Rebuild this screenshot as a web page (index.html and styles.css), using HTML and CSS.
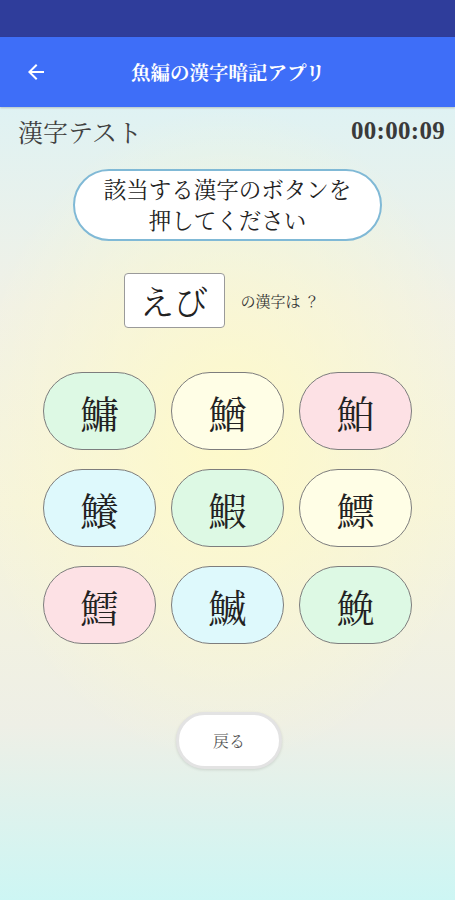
FILE: index.html
```html
<!DOCTYPE html>
<html lang="ja">
<head>
<meta charset="utf-8">
<title>魚編の漢字暗記アプリ</title>
<link rel="stylesheet" href="styles.css">
</head>
<body>
<div class="screen">
  <div class="status-bar"></div>
  <header class="app-bar">
    <svg class="back" width="24" height="24" viewBox="0 0 24 24"><path d="M20 11H7.83l5.59-5.59L12 4l-8 8 8 8 1.41-1.41L7.83 13H20v-2z" fill="#fff"/></svg>
    <h1 class="app-title">魚編の漢字暗記アプリ</h1>
  </header>
  <main class="content">
    <div class="title-row">
      <span class="page-title">漢字テスト</span>
      <span class="timer">00:00:09</span>
    </div>
    <div class="instruction">該当する漢字のボタンを<br>押してください</div>
    <div class="question">
      <div class="reading">えび</div>
      <span class="question-label">の漢字は ？</span>
    </div>
    <div class="grid">
      <button class="kanji green">鱅</button>
      <button class="kanji cream">鰌</button>
      <button class="kanji pink">鮊</button>
      <button class="kanji cyan">鱶</button>
      <button class="kanji green">鰕</button>
      <button class="kanji cream">鰾</button>
      <button class="kanji pink">鱈</button>
      <button class="kanji cyan">鰄</button>
      <button class="kanji green">鮸</button>
    </div>
    <div class="back-row">
      <button class="back-btn">戻る</button>
    </div>
  </main>
</div>
</body>
</html>
```

FILE: styles.css
```css
html, body {
  margin: 0;
  padding: 0;
}
body {
  width: 455px;
  height: 900px;
  overflow: hidden;
  font-family: "Noto Serif CJK JP", "Liberation Serif", "Noto Sans CJK JP", serif;
}
.screen {
  display: flex;
  flex-direction: column;
  height: 900px;
}
.status-bar {
  height: 37px;
  background: #2f3d9b;
}
.app-bar {
  height: 70px;
  background: #3e6ef8;
  display: flex;
  align-items: center;
  position: relative;
  box-shadow: 0 1px 2px rgba(0,0,0,0.2);
}
.back {
  margin-left: 24px;
}
.app-title {
  margin: 0;
  position: absolute;
  left: 0;
  right: 0;
  text-align: center;
  color: #fff;
  font-family: "Noto Serif CJK JP", "Noto Sans CJK JP", serif;
  font-size: 19.5px;
  font-weight: 700;
  pointer-events: none;
  padding-left: 1px;
}
.content {
  flex: 1;
  display: flex;
  flex-direction: column;
  background:
    radial-gradient(ellipse 260px 330px at 228px 330px, rgba(255,250,200,0.9), rgba(255,250,210,0) 100%),
    linear-gradient(180deg, #dff2f3 0%, #f1f1e6 25%, #f6f4dc 50%, #eeefe6 78%, #cdf6f4 100%);
}
.title-row {
  height: 48px;
  display: flex;
  align-items: center;
  justify-content: space-between;
  padding: 0 10px 0 18px;
}
.page-title {
  font-size: 25px;
  color: #404040;
}
.timer {
  font-family: "Liberation Serif", serif;
  font-weight: 700;
  font-size: 25px;
  color: #3a3a3a;
  letter-spacing: 0.3px;
}
.instruction {
  align-self: center;
  margin-top: 14px;
  width: 309px;
  height: 72px;
  box-sizing: border-box;
  border: 2px solid #80b9d6;
  border-radius: 36px;
  background: #fff;
  display: flex;
  align-items: center;
  justify-content: center;
  text-align: center;
  font-size: 22.5px;
  line-height: 31px;
  color: #222;
  padding-bottom: 2px;
}
.question {
  margin-top: 32px;
  display: flex;
  align-items: center;
  justify-content: center;
  gap: 16px;
  padding-right: 12px;
}
.reading {
  width: 101px;
  height: 55px;
  box-sizing: border-box;
  border: 1px solid #9a9a9a;
  border-radius: 4px;
  background: #fff;
  display: flex;
  align-items: center;
  justify-content: center;
  font-size: 34px;
  color: #222;
}
.question-label {
  font-size: 15px;
  color: #333;
}
.grid {
  margin-top: 44px;
  display: grid;
  grid-template-columns: repeat(3, 113px);
  grid-auto-rows: 78px;
  column-gap: 15px;
  row-gap: 19px;
  justify-content: center;
}
.kanji {
  margin: 0;
  padding: 0;
  border: 1.5px solid #7d7d7d;
  border-radius: 40px;
  font-size: 38px;
  color: #222;
  font-family: "Noto Serif CJK JP", "Noto Sans CJK JP", serif;
  display: flex;
  align-items: center;
  justify-content: center;
}
.green { background: #ddf9e4; }
.cream { background: #fffee6; }
.pink { background: #fde1e5; }
.cyan { background: #def9fc; }
.back-row {
  margin-top: 68px;
  display: flex;
  justify-content: center;
  padding-left: 3px;
}
.back-btn {
  width: 106px;
  height: 57px;
  box-sizing: border-box;
  border: 3px solid #e3e3e3;
  border-radius: 29px;
  background: #fff;
  box-shadow: 0 1px 3px rgba(0,0,0,0.12);
  font-size: 16px;
  color: #555;
  font-family: "Noto Serif CJK JP", "Noto Sans CJK JP", serif;
}
```
